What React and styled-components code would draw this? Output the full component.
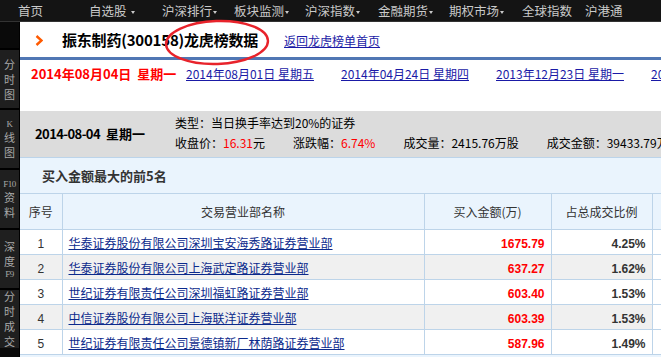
import React from 'react';
import styled, { createGlobalStyle } from 'styled-components';

const GlobalStyle = createGlobalStyle`
  html, body { margin: 0; padding: 0; background: #eaf4fd; overflow: hidden; }
  body { font-family: "Noto Sans CJK SC", "Liberation Sans", sans-serif; font-size: 12px; color: #000; }
  #root { width: 661px; height: 357px; overflow: hidden; }
`;

const Page = styled.div`
  width: 661px;
  height: 357px;
  display: flex;
  flex-direction: column;
  overflow: hidden;
`;

const TopNav = styled.div`
  flex: 0 0 auto;
  height: 22px;
  box-sizing: border-box;
  border-bottom: 1px solid #333;
  background: #141414;
  display: flex;
  align-items: center;
  padding: 1px 0 0 18px;
`;

const NavItem = styled.div`
  flex: 0 0 auto;
  width: ${p => p.$w}px;
  display: flex;
  align-items: center;
  color: #c9c9c9;
  font-size: 12.5px;
  line-height: 14px;
  white-space: nowrap;
`;

const Caret = styled.span`
  display: inline-block;
  margin-left: ${p => p.$gap}px;
  margin-top: 3px;
  width: 0;
  height: 0;
  border-left: 2.5px solid transparent;
  border-right: 2.5px solid transparent;
  border-top: 3px solid #c9c9c9;
`;

const Body = styled.div`
  flex: 1 1 auto;
  display: flex;
  min-height: 0;
`;

const Sidebar = styled.div`
  flex: 0 0 19px;
  background: #0a0a0a;
  border-right: 1px solid #000;
  padding-top: 26px;
  display: flex;
  flex-direction: column;
`;

const SideItem = styled.div`
  height: 58px;
  border-top: 2px solid #000;
  background: #1f1f1f;
  color: #a8a8a8;
  display: flex;
  flex-direction: column;
  align-items: center;
  justify-content: center;
`;

const SideChar = styled.div`
  font-size: ${p => (p.$small ? 9 : 11)}px;
  font-family: ${p => (p.$small ? '"Liberation Serif", serif' : 'inherit')};
  letter-spacing: ${p => (p.$small ? '-0.5px' : '0')};
  line-height: ${p => (p.$small ? 11 : 15)}px;
  height: ${p => (p.$small ? 11 : 15)}px;
`;

const Content = styled.div`
  position: relative;
  flex: 0 0 700px;
  width: 700px;
  background: #eaf4fd;
  display: flex;
  flex-direction: column;
`;

const HeaderRow = styled.div`
  box-sizing: border-box;
  padding: 1px 0 0 15px;
  background: #fff;
  border-bottom: 3px solid #5077b4;
  height: 38px;
  display: flex;
  align-items: center;
`;

const Title = styled.h1`
  margin: 0 0 0 19px;
  font-size: 15px;
  font-weight: bold;
  color: #000;
  line-height: 18px;
  letter-spacing: -0.2px;
  white-space: nowrap;
`;

const ReturnLink = styled.a`
  margin-left: 26px;
  color: #1a1aa6;
  text-decoration: underline;
  font-size: 12px;
  white-space: nowrap;
`;

const DatesRow = styled.div`
  height: 51px;
  box-sizing: border-box;
  background: #fff;
  padding: 6px 0 0 11px;
  display: grid;
  grid-template-columns: repeat(5, 155px);
  align-items: start;
`;

const CurrentDate = styled.span`
  color: #f00;
  font-weight: bold;
  font-size: 13px;
  line-height: 16px;
  white-space: nowrap;
`;

const DateLink = styled.a`
  color: #1a1aa6;
  text-decoration: underline;
  font-size: 12px;
  line-height: 16px;
  white-space: nowrap;
`;

const InfoBar = styled.div`
  height: 47px;
  box-sizing: border-box;
  background: #dcdcdc;
  border-bottom: 1px solid #bcd4ea;
  padding: 0 0 2px 15px;
  display: flex;
  align-items: center;
`;

const InfoDate = styled.div`
  flex: 0 0 140px;
  font-weight: bold;
  font-size: 13px;
  white-space: nowrap;
`;

const InfoNum = styled.span`
  letter-spacing: -0.6px;
`;

const InfoLines = styled.div`
  display: flex;
  flex-direction: column;
  font-size: 12px;
  line-height: 20px;
`;

const InfoLine = styled.div`
  display: flex;
  gap: 28px;
  white-space: nowrap;
`;

const Red = styled.span`
  color: #f00;
`;

const SectionTitle = styled.div`
  height: 35px;
  display: flex;
  align-items: center;
  padding-left: 22px;
  font-size: 13px;
  font-weight: bold;
  color: #333;
`;

const Table = styled.table`
  border-collapse: collapse;
  table-layout: fixed;
  width: 700px;
`;

const Th = styled.th`
  height: 35px;
  padding: 0;
  font-weight: normal;
  font-size: 12px;
  color: #333;
  background: #eaf4fd;
  border: 1px solid #bdd4e9;
  border-left: ${p => (p.$first ? 'none' : '1px solid #bdd4e9')};
  text-align: center;
  white-space: nowrap;
  overflow: hidden;
`;

const Tr = styled.tr`
  background: ${p => (p.$alt ? '#f0f0f0' : '#fff')};
`;

const Td = styled.td`
  height: 24px;
  padding: 0 6px;
  border: 1px solid #bdd4e9;
  border-left: ${p => (p.$first ? 'none' : '1px solid #bdd4e9')};
  background: ${p => (p.$plain ? '#fff' : 'transparent')};
  text-align: ${p => p.$align || 'left'};
  white-space: nowrap;
  overflow: hidden;
`;

const IndexText = styled.span`
  font-family: "Liberation Sans", Arial, sans-serif;
  font-size: 12px;
  color: #333;
`;

const BrokerLink = styled.a`
  color: #0b2a8c;
  text-decoration: underline;
  font-size: 12px;
`;

const Amount = styled.span`
  font-family: "Liberation Sans", Arial, sans-serif;
  font-weight: bold;
  font-size: 12px;
  color: ${p => (p.$red ? '#f00' : '#333')};
`;

const Annotation = styled.svg`
  position: absolute;
  left: 143px;
  top: -4px;
  pointer-events: none;
  overflow: visible;
`;

const navItems = [
  { t: '首页', w: 71 },
  { t: '自选股', w: 73, c: 4 },
  { t: '沪深排行', w: 72, c: 1 },
  { t: '板块监测', w: 71, c: 1 },
  { t: '沪深指数', w: 73, c: 1 },
  { t: '金融期货', w: 71, c: 1 },
  { t: '期权市场', w: 73, c: 1 },
  { t: '全球指数', w: 63 },
  { t: '沪港通', w: 60 },
];

const sideItems = [
  [['分'], ['时'], ['图']],
  [['K', true], ['线'], ['图']],
  [['F10', true], ['资'], ['料']],
  [['深'], ['度'], ['F9', true]],
  [['分'], ['时'], ['成'], ['交']],
];

const rows = [
  ['1', '华泰证券股份有限公司深圳宝安海秀路证券营业部', '1675.79', '4.25%'],
  ['2', '华泰证券股份有限公司上海武定路证券营业部', '637.27', '1.62%'],
  ['3', '世纪证券有限责任公司深圳福虹路证券营业部', '603.40', '1.53%'],
  ['4', '中信证券股份有限公司上海联洋证券营业部', '603.39', '1.53%'],
  ['5', '世纪证券有限责任公司景德镇新厂林荫路证券营业部', '587.96', '1.49%'],
];

export default function App() {
  return (
    <Page>
      <GlobalStyle />
      <TopNav>
        {navItems.map(n => (
          <NavItem key={n.t} $w={n.w}>
            {n.t}
            {n.c !== undefined && <Caret $gap={n.c} />}
          </NavItem>
        ))}
      </TopNav>
      <Body>
        <Sidebar>
          {sideItems.map((item, i) => (
            <SideItem key={i}>
              {item.map(([ch, small], j) => (
                <SideChar key={j} $small={small}>{ch}</SideChar>
              ))}
            </SideItem>
          ))}
        </Sidebar>
        <Content>
          <HeaderRow>
            <svg width="8" height="11" viewBox="0 0 8 11">
              <polyline points="1.5,1 6.5,5.5 1.5,10" fill="none" stroke="#ff5a00" strokeWidth="2.4" />
            </svg>
            <Title>振东制药(300158)龙虎榜数据</Title>
            <ReturnLink href="#">返回龙虎榜单首页</ReturnLink>
          </HeaderRow>
          <DatesRow>
            <CurrentDate>2014年08月04日&nbsp;&nbsp;星期一</CurrentDate>
            <DateLink href="#">2014年08月01日 星期五</DateLink>
            <DateLink href="#">2014年04月24日 星期四</DateLink>
            <DateLink href="#">2013年12月23日 星期一</DateLink>
            <DateLink href="#">2013年12月20日 星期五</DateLink>
          </DatesRow>
          <InfoBar>
            <InfoDate><InfoNum>2014-08-04</InfoNum>&nbsp;&nbsp;星期一</InfoDate>
            <InfoLines>
              <InfoLine>类型：当日换手率达到20%的证券</InfoLine>
              <InfoLine>
                <span>收盘价：<Red>16.31</Red>元</span>
                <span>涨跌幅：<Red>6.74%</Red></span>
                <span>成交量：2415.76万股</span>
                <span>成交金额：39433.79万元</span>
              </InfoLine>
            </InfoLines>
          </InfoBar>
          <SectionTitle>买入金额最大的前5名</SectionTitle>
          <Table>
            <colgroup>
              <col style={{ width: 42 }} />
              <col style={{ width: 362 }} />
              <col style={{ width: 127 }} />
              <col style={{ width: 101 }} />
              <col style={{ width: 68 }} />
            </colgroup>
            <thead>
              <tr>
                <Th $first>序号</Th>
                <Th>交易营业部名称</Th>
                <Th>买入金额(万)</Th>
                <Th>占总成交比例</Th>
                <Th />
              </tr>
            </thead>
            <tbody>
              {rows.map((r, i) => (
                <Tr key={r[0]} $alt={i % 2 === 1}>
                  <Td $first $align="center"><IndexText>{r[0]}</IndexText></Td>
                  <Td><BrokerLink href="#">{r[1]}</BrokerLink></Td>
                  <Td $align="right"><Amount $red>{r[2]}</Amount></Td>
                  <Td $align="right"><Amount>{r[3]}</Amount></Td>
                  <Td $plain />
                </Tr>
              ))}
            </tbody>
          </Table>
          <Annotation width="108" height="49" viewBox="0 0 108 49">
            <ellipse cx="54" cy="24.5" rx="51" ry="21.5" fill="none" stroke="#e8232b" strokeWidth="2.4" transform="rotate(-2 54 24.5)" />
          </Annotation>
        </Content>
      </Body>
    </Page>
  );
}
